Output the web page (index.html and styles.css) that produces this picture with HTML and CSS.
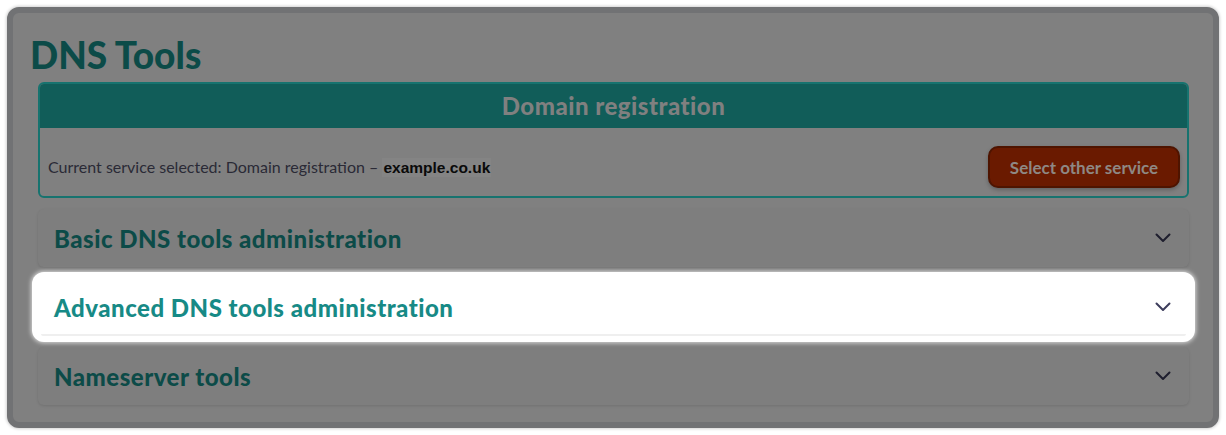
FILE: index.html
```html
<!DOCTYPE html>
<html lang="en">
<head>
<meta charset="utf-8">
<title>DNS Tools</title>
<link rel="stylesheet" href="styles.css">
</head>
<body>
<div class="card">
  <h1 class="page-title">DNS Tools</h1>
  <section class="service-box">
    <header class="service-head">Domain registration</header>
    <div class="service-body">
      <p class="service-text">Current service selected: Domain registration – <span class="domain">example.co.uk</span></p>
      <button class="btn-other">Select other service</button>
    </div>
  </section>
  <div class="accordion">
    <div class="acc-row">
      <span class="acc-title">Basic DNS tools administration</span>
      <svg class="chev" viewBox="0 0 16 10" width="16" height="10"><path d="M1.5 1.5 L8 8 L14.5 1.5" fill="none" stroke-width="2" stroke-linecap="round" stroke-linejoin="round"/></svg>
    </div>
    <div class="acc-row acc-row--active">
      <span class="acc-title">Advanced DNS tools administration</span>
      <svg class="chev" viewBox="0 0 16 10" width="16" height="10"><path d="M1.5 1.5 L8 8 L14.5 1.5" fill="none" stroke-width="2" stroke-linecap="round" stroke-linejoin="round"/></svg>
    </div>
    <div class="acc-row">
      <span class="acc-title">Nameserver tools</span>
      <svg class="chev" viewBox="0 0 16 10" width="16" height="10"><path d="M1.5 1.5 L8 8 L14.5 1.5" fill="none" stroke-width="2" stroke-linecap="round" stroke-linejoin="round"/></svg>
    </div>
  </div>
</div>
</body>
</html>
```
FILE: styles.css
```css
html, body {
  margin: 0;
  padding: 0;
  background: #ffffff;
}
body {
  font-family: "Lato", "Noto Sans", sans-serif;
  padding: 7px;
}
.card {
  background: #808080;
  border: 6px solid #717274;
  border-radius: 12px;
  box-shadow: 0 0 3px 1px rgba(0,0,0,0.18);
  padding: 0 24px 19px 25px;
  height: 421px;
  box-sizing: border-box;
}
.page-title {
  margin: 0 0 0 -8px;
  padding-top: 20px;
  font-size: 37px;
  line-height: 44px;
  font-weight: 900;
  color: #0c4b48;
  height: 49px;
}
.service-box {
  border: 2px solid #17736f;
  border-radius: 6px;
  overflow: hidden;
}
.service-head {
  background: #115d59;
  color: #808080;
  text-align: center;
  font-size: 24px;
  font-weight: 900;
  letter-spacing: 0.5px;
  height: 44px;
  line-height: 44px;
}
.service-body {
  display: flex;
  align-items: center;
  justify-content: space-between;
  padding: 18px 7px 8px 8px;
}
.service-text {
  margin: 0;
  font-size: 16px;
  color: #2a2a36;
}
.domain {
  font-family: "Liberation Sans", Arial, sans-serif;
  font-weight: 700;
  font-size: 15.5px;
  color: #0a0a0a;
  background: #848484;
  padding: 1px 1px;
}
.btn-other {
  font-family: "Lato", sans-serif;
  font-size: 17px;
  font-weight: 700;
  color: #8e8884;
  background: #6a1a00;
  border: 2px solid #4e1400;
  border-radius: 10px;
  height: 42px;
  width: 192px;
  box-shadow: 0 2px 4px rgba(0,0,0,0.25);
  padding: 0;
}
.accordion {
  display: flex;
  flex-direction: column;
  gap: 11px;
  margin-top: 11px;
}
.acc-row {
  display: flex;
  align-items: center;
  justify-content: space-between;
  height: 58px;
  padding: 0 18px 0 16px;
  background: #7e7e7e;
  border-radius: 6px;
  box-shadow: 0 1px 3px rgba(0,0,0,0.12);
}
.acc-title {
  font-size: 24px;
  font-weight: 900;
  letter-spacing: 0.5px;
  color: #0c4b48;
}
.chev path {
  stroke: #1e1e2e;
}
.acc-row--active {
  background: #ffffff;
  position: relative;
  box-shadow: 0 0 0 6px #ffffff, 0 0 4px 7px rgba(255,255,255,0.7);
}
.acc-row--active::after {
  content: "";
  position: absolute;
  left: 3px;
  right: 3px;
  bottom: 0;
  height: 2px;
  border-radius: 0 0 6px 6px;
  background: #efefef;
}
.acc-row--active .acc-title {
  color: #178a86;
}
.acc-row--active .chev path {
  stroke: #3d3d5c;
}
```
